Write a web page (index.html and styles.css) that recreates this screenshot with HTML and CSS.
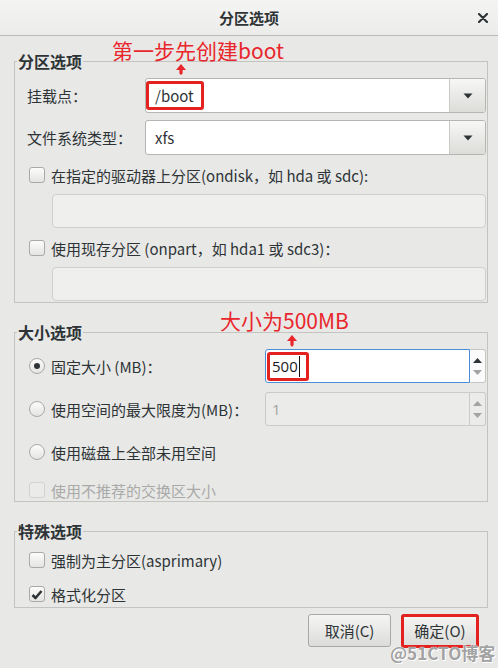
FILE: index.html
```html
<!DOCTYPE html>
<html lang="zh-CN">
<head>
<meta charset="utf-8">
<title>分区选项</title>
<link rel="stylesheet" href="styles.css">
</head>
<body>
<div class="window">
  <header class="titlebar">
    <span class="title">分区选项</span>
    <span class="close"><svg width="10" height="10" viewBox="0 0 10 10"><path d="M1 1 L9 9 M9 1 L1 9" stroke="#2e3436" stroke-width="2.2" stroke-linecap="round"/></svg></span>
  </header>
  <main class="content">
    <fieldset class="group">
      <legend>分区选项</legend>
      <div class="group-body body-part">
        <div class="field-row">
          <span class="field-label">挂载点<span class="colon">：</span></span>
          <div class="combo">
            <span class="combo-text">/boot</span>
            <span class="combo-btn"><svg width="10" height="6" viewBox="0 0 10 6"><path d="M0.5 0.5 H9.5 L5 5.5 Z" fill="#2e3436"/></svg></span>
          </div>
        </div>
        <div class="field-row mt7">
          <span class="field-label">文件系统类型<span class="colon">：</span></span>
          <div class="combo">
            <span class="combo-text">xfs</span>
            <span class="combo-btn"><svg width="10" height="6" viewBox="0 0 10 6"><path d="M0.5 0.5 H9.5 L5 5.5 Z" fill="#2e3436"/></svg></span>
          </div>
        </div>
        <div class="check-row mt10"><span class="check"></span><span>在指定的驱动器上分区(ondisk，如 hda 或 sdc):</span></div>
        <div class="entry mt9"></div>
        <div class="check-row mt10"><span class="check"></span><span>使用现存分区 (onpart，如 hda1 或 sdc3)<span class="colon">：</span></span></div>
        <div class="entry mt9"></div>
      </div>
    </fieldset>

    <fieldset class="group">
      <legend>大小选项</legend>
      <div class="group-body body-size">
        <div class="spin-row">
          <div class="check-row"><span class="radio checked"><span class="dot"></span></span><span>固定大小 (MB)<span class="colon">：</span></span></div>
          <div class="spin focus">
            <div class="spin-entry"><span>500</span><span class="caret"></span></div>
            <div class="spin-btns">
              <svg width="9" height="5" viewBox="0 0 9 5"><path d="M0 5 L4.5 0 L9 5 Z" fill="#2e3436"/></svg>
              <svg width="9" height="5" viewBox="0 0 9 5"><path d="M0 0 H9 L4.5 5 Z" fill="#a3a3a1"/></svg>
            </div>
          </div>
        </div>
        <div class="spin-row mt9">
          <div class="check-row"><span class="radio"></span><span>使用空间的最大限度为(MB)<span class="colon">：</span></span></div>
          <div class="spin disabled">
            <div class="spin-entry"><span>1</span></div>
            <div class="spin-btns">
              <svg width="9" height="5" viewBox="0 0 9 5"><path d="M0 5 L4.5 0 L9 5 Z" fill="#a3a3a1"/></svg>
              <svg width="9" height="5" viewBox="0 0 9 5"><path d="M0 0 H9 L4.5 5 Z" fill="#a3a3a1"/></svg>
            </div>
          </div>
        </div>
        <div class="check-row mt16"><span class="radio"></span><span>使用磁盘上全部未用空间</span></div>
        <div class="check-row mt18 is-disabled"><span class="check"></span><span>使用不推荐的交换区大小</span></div>
      </div>
    </fieldset>

    <fieldset class="group">
      <legend>特殊选项</legend>
      <div class="group-body body-special">
        <div class="check-row"><span class="check"></span><span>强制为主分区(asprimary)</span></div>
        <div class="check-row mt14"><span class="check checked"><svg width="12" height="11" viewBox="0 0 12 11"><path d="M1.5 6 L4.5 9 L10.5 2" fill="none" stroke="#2e3436" stroke-width="2.6" stroke-linejoin="round"/></svg></span><span>格式化分区</span></div>
      </div>
    </fieldset>

    <div class="actions">
      <button class="btn btn-cancel" type="button">取消(C)</button>
      <button class="btn btn-ok" type="button">确定(O)</button>
    </div>
  </main>

  <div class="note note-boot">第一步先创建boot</div>
  <svg class="arrow arrow-boot" width="10" height="11" viewBox="0 0 10 11"><path d="M5 0 L10 6 L6.6 6 L6.6 9.5 L5 11 L3.4 9.5 L3.4 6 L0 6 Z" fill="#e8262b"/></svg>
  <div class="mark mark-boot"></div>
  <div class="note note-size">大小为500MB</div>
  <svg class="arrow arrow-size" width="10" height="12" viewBox="0 0 10 12"><path d="M5 0 L10 6 L6.6 6 L6.6 10 L5 12 L3.4 10 L3.4 6 L0 6 Z" fill="#e8262b"/></svg>
  <div class="mark mark-size"></div>
  <div class="mark mark-ok"></div>
  <div class="watermark">@51CTO博客</div>
</div>
</body>
</html>
```

FILE: styles.css
```css
* { box-sizing: border-box; }
html, body { margin: 0; padding: 0; }
body {
  width: 498px;
  height: 668px;
  overflow: hidden;
  background: #e8e8e7;
  font-family: "Noto Sans CJK SC", "Open Sans", sans-serif;
  font-size: 15px;
  color: #2e3436;
}
.window { position: relative; width: 498px; height: 668px; }

.titlebar {
  height: 36px;
  border-bottom: 1px solid #bcbcb8;
  background: linear-gradient(#f4f4f3, #ececeb);
  display: grid;
  grid-template-columns: 1fr auto 1fr;
  align-items: center;
}
.title { grid-column: 2; font-weight: bold; font-size: 15px; line-height: 20px; }
.close { grid-column: 3; justify-self: end; margin-right: 10px; display: flex; }

.content { padding: 15px 10px 0 14px; }

.colon { font-family: "Noto Sans CJK JP", "Noto Sans CJK SC", sans-serif; }

.group {
  margin: 0;
  padding: 0;
  border: 1px solid #c3c3c0;
  min-width: 0;
}
.group + .group { margin-top: 19px; }
.group legend {
  margin-left: 2px;
  padding: 0 1px;
  font-weight: bold;
  font-size: 16px;
  line-height: 20px;
}
.group-body { display: flex; flex-direction: column; padding: 7px 1px 1px 12px; }
.body-special { padding-top: 9px; padding-bottom: 3px; }

.mt7 { margin-top: 7px; }
.mt9 { margin-top: 9px; }
.mt10 { margin-top: 10px; }
.mt14 { margin-top: 14px; }
.mt16 { margin-top: 16px; }
.mt18 { margin-top: 18px; }

.field-row { display: flex; align-items: center; height: 35px; }
.field-label { width: 118px; flex: none; }
.combo {
  flex: 0 0 341px;
  height: 35px;
  display: flex;
  background: #fff;
  border: 1px solid #b5b5b2;
  border-radius: 3px;
}
.combo-text { flex: 1; display: flex; align-items: center; padding-left: 9px; }
.combo-btn {
  width: 36px;
  border-left: 1px solid #c9c9c6;
  border-radius: 0 2px 2px 0;
  background: linear-gradient(#f7f7f6, #dcdcd9);
  display: flex;
  align-items: center;
  justify-content: center;
}

.check-row { display: flex; align-items: center; height: 20px; }
.check, .radio {
  width: 16px;
  height: 16px;
  flex: none;
  margin: 0 6px 0 2px;
  border: 1px solid #a9a9a6;
  background: linear-gradient(#fcfcfc, #e4e4e2);
  display: flex;
  align-items: center;
  justify-content: center;
}
.check { border-radius: 3px; }
.radio { border-radius: 50%; }
.radio .dot { width: 6px; height: 6px; border-radius: 50%; background: #2e3436; }
.is-disabled { color: #a9aaa7; }
.is-disabled .check { border-color: #d2d2cf; background: #ebebea; }

.entry {
  margin-left: 25px;
  height: 34px;
  background: #efefee;
  border: 1px solid #cfcfcc;
  border-radius: 4px;
}

.spin-row { display: flex; align-items: center; justify-content: space-between; height: 34px; }
.spin { width: 221px; height: 34px; display: flex; }
.spin-entry {
  flex: 1;
  display: flex;
  align-items: center;
  padding-left: 6px;
  background: #fff;
  border: 1px solid #4a8ed8;
  border-radius: 3px 0 0 3px;
  font-family: "Open Sans", sans-serif;
  font-size: 15px;
  color: #1a1a1a;
}
.caret { width: 1px; height: 21px; background: #111; margin-left: 1px; }
.spin-btns {
  width: 16px;
  display: flex;
  flex-direction: column;
  align-items: center;
  justify-content: space-around;
  padding: 4px 0;
  background: #fbfbfb;
  border: 1px solid #c6c6c3;
  border-left: none;
  border-radius: 0 3px 3px 0;
}
.spin.disabled .spin-entry { background: #ebebea; border-color: #cacac7; color: #a3a3a1; }
.spin.disabled .spin-btns { background: #ebebea; border-color: #cacac7; }

.actions { display: flex; justify-content: flex-end; gap: 10px; margin-top: 6px; padding-right: 9px; }
.btn {
  height: 33px;
  padding: 0;
  border: 1px solid #a8a8a5;
  border-radius: 3px;
  background: linear-gradient(#f5f5f4, #dcdcda);
  font: inherit;
  color: #2e3436;
}
.btn-cancel { width: 83px; }
.btn-ok { width: 78px; }

.note {
  position: absolute;
  color: #e8262b;
  font-size: 21px;
  line-height: 24px;
  white-space: nowrap;
}
.note-boot { left: 112px; top: 38px; }
.note-size { left: 220px; top: 308px; }
.arrow { position: absolute; }
.arrow-boot { left: 176px; top: 64px; }
.arrow-size { left: 287px; top: 335px; }
.mark { position: absolute; border: 3px solid #e3211f; border-radius: 3px; }
.mark-boot { left: 146px; top: 81px; width: 58px; height: 29px; }
.mark-size { left: 267px; top: 352px; width: 42px; height: 29px; }
.mark-ok { left: 401px; top: 614px; width: 78px; height: 34px; }

.watermark {
  position: absolute;
  left: 390px;
  top: 642px;
  font-size: 17px;
  line-height: 22px;
  font-weight: bold;
  color: #a2a2a2;
  text-shadow: 0 0 1px #fff, 0 0 1px #fff, 1px 1px 0 #fff;
  white-space: nowrap;
}
```
